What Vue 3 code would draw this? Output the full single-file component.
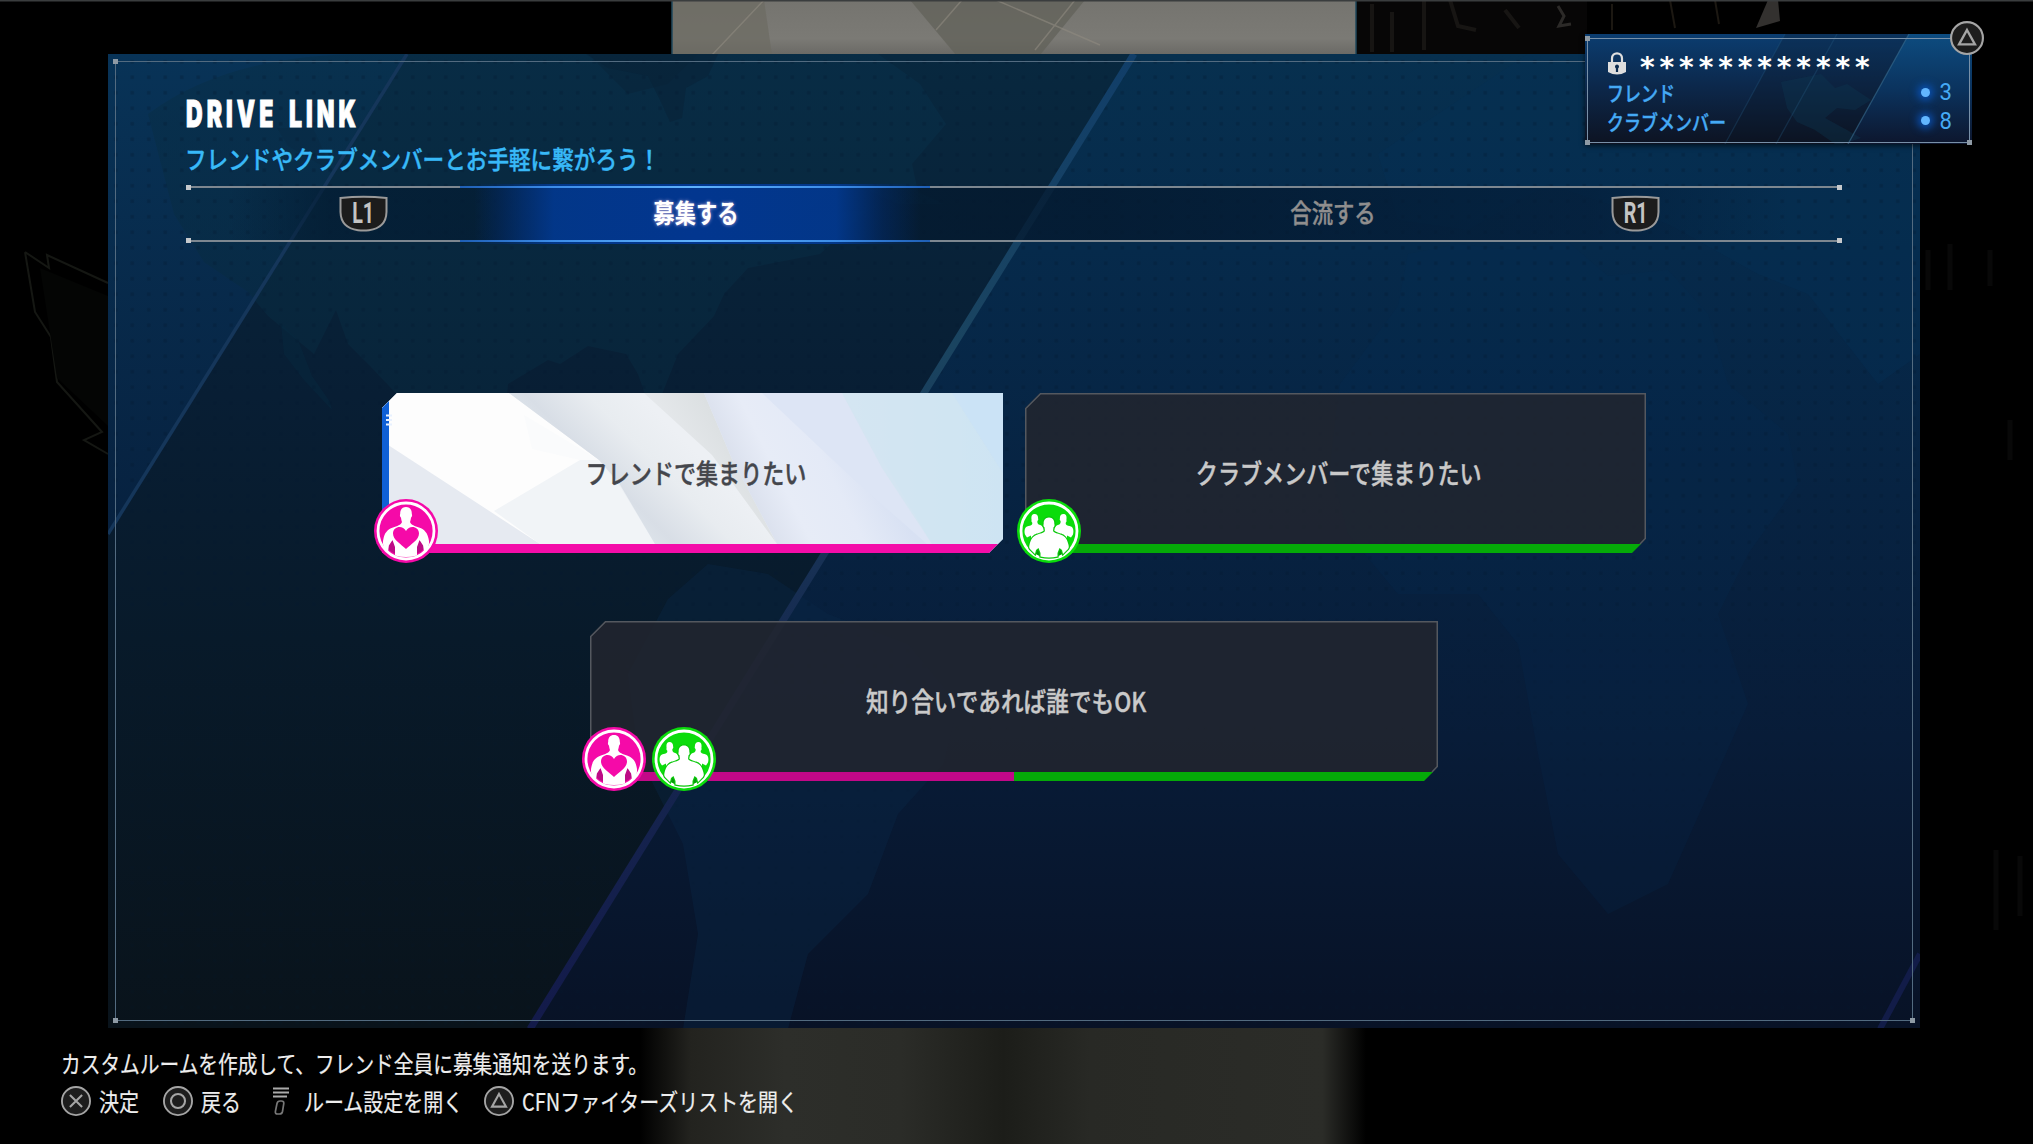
<template>
    <div class="screen">
        <!-- dimmed stage behind the window -->
        <svg class="backdrop" viewBox="0 0 2033 1144" aria-hidden="true">
            <defs>
                <linearGradient id="stoneTop" x1="0" y1="0" x2="0" y2="1">
                    <stop offset="0" stop-color="#75746f" />
                    <stop offset="0.7" stop-color="#7b7a75" />
                    <stop offset="1" stop-color="#6a6965" />
                </linearGradient>
                <linearGradient id="stoneFloor" x1="0" y1="0" x2="1" y2="0">
                    <stop offset="0" stop-color="#000" />
                    <stop offset="0.07" stop-color="#23231f" />
                    <stop offset="0.2" stop-color="#2d2e2a" />
                    <stop offset="0.36" stop-color="#2b2c28" />
                    <stop offset="0.5" stop-color="#1c1d19" />
                    <stop offset="0.62" stop-color="#282925" />
                    <stop offset="0.94" stop-color="#2b2c28" />
                    <stop offset="1" stop-color="#000" />
                </linearGradient>
            </defs>
            <rect width="2033" height="1144" fill="#000" />
            <rect x="672" y="0" width="684" height="55" fill="url(#stoneTop)" />
            <path d="M672 0H764L772 55H672Z" fill="#6c6b62" opacity="0.7" />
            <path d="M910 0H1085L1040 55H956Z" fill="#62615a" opacity="0.75" />
            <path d="M764 0L712 55M962 0L936 30M996 0L1100 45M1075 0L1035 50" stroke="#8f8b80" stroke-width="1.5" fill="none" opacity="0.6" />
            <path d="M672 0V54M1356 0V54" stroke="#20485c" stroke-width="1.5" />
            <rect x="1357" y="0" width="230" height="54" fill="#070606" />
            <path d="M1372 4v48M1392 12v40M1424 0v50M1450 0l8 26 18 4M1505 10l14 18" stroke="#171513" stroke-width="4" fill="none" />
            <path d="M1558 6l6 10-5 10 12 -2" stroke="#2c2a28" stroke-width="3" fill="none" />
            <path d="M1612 4v26M1670 0l5 28M1715 0l4 24" stroke="#1c1812" stroke-width="2" fill="none" />
            <path d="M1768 0h10l2 21-24 7z" fill="#33312f" />
            <path d="M25 252l24 16-2-13 61 28M25 252l10 60 16 25 6 45 45 50-18 8 24 14" stroke="#151713" stroke-width="2" fill="none" />
            <path d="M40 268l68 28v130L57 378z" fill="#040504" />
            <rect x="640" y="1028" width="726" height="116" fill="url(#stoneFloor)" />
            <path d="M1928 250v40M1950 244v46M1990 250v36M2010 420v40M1996 850v80M2020 856v60" stroke="#080808" stroke-width="5" />
            <rect width="2033" height="1.5" fill="#3a3d3e" />
        </svg>

        <main class="window">
            <svg class="window-art" viewBox="0 0 1812 974" aria-hidden="true">
                <defs>
                    <linearGradient id="winBase" x1="0" y1="0" x2="0" y2="1">
                        <stop offset="0" stop-color="#07304f" />
                        <stop offset="0.2" stop-color="#062a4b" />
                        <stop offset="0.45" stop-color="#072342" />
                        <stop offset="0.7" stop-color="#081c38" />
                        <stop offset="1" stop-color="#081226" />
                    </linearGradient>
                    <linearGradient id="winShade" x1="0" y1="0" x2="0" y2="1">
                        <stop offset="0" stop-color="#08283f" />
                        <stop offset="0.35" stop-color="#081e34" />
                        <stop offset="0.6" stop-color="#081a2a" />
                        <stop offset="1" stop-color="#09131b" />
                    </linearGradient>
                    <linearGradient id="winCorner" x1="0" y1="0" x2="0" y2="1">
                        <stop offset="0" stop-color="#083357" />
                        <stop offset="1" stop-color="#07213f" />
                    </linearGradient>
                    <linearGradient id="landLeft" x1="0" y1="0" x2="0" y2="1">
                        <stop offset="0" stop-color="#082f49" />
                        <stop offset="1" stop-color="#08263a" />
                    </linearGradient>
                    <linearGradient id="slashLine" x1="0" y1="0" x2="0" y2="1">
                        <stop offset="0" stop-color="#113e69" />
                        <stop offset="0.3" stop-color="#1a4460" />
                        <stop offset="0.6" stop-color="#162a50" />
                        <stop offset="1" stop-color="#131a4a" />
                    </linearGradient>
                    <pattern id="dots" width="16.5" height="15.5" patternUnits="userSpaceOnUse">
                        <rect x="6" y="6" width="3.5" height="3.5" fill="#03182f" />
                    </pattern>
                </defs>
                <rect width="1812" height="975" fill="url(#winBase)" />
                <path d="M0 0H1026L420 975H0Z" fill="url(#winShade)" />
                <path d="M0 0H298L0 480Z" fill="url(#winCorner)" />
                <!-- north america -->
                <path d="M40 60Q120 0 260 0H480L520 40 560 30 590 0H770L812 30 826 52 838 70 804 110 810 138 836 150 790 150 760 136 722 134 688 168 716 160 760 156 712 200 640 214 616 240 606 262 570 300 554 340 564 390 548 372 530 320 518 300 480 292 452 310 440 306 400 330 396 372 404 420 440 440 452 470 400 450 376 410 340 380 300 352 262 312 240 290 228 256 206 300 160 262 140 238 96 208 66 160Z" fill="url(#landLeft)" opacity="0.6" />
                <path d="M478 0H610L600 22 578 34 574 64 562 68 552 46 540 22 500 14Z" fill="#082339" opacity="0.6" />
                <path d="M169 74L205 74 225 118 180 92Z" fill="#082339" opacity="0.2" />
                <path d="M173 270L190 286 204 322 222 348 224 356 196 326 176 300Z" fill="#082a42" opacity="0.4" />
                <!-- south america -->
                <path d="M560 545L600 510 660 520 720 560 800 590 850 650 835 710 790 760 760 840 700 900 680 975H575L590 880 575 790 530 700 520 620Z" fill="#0a2748" opacity="0.38" />
                <!-- africa and europe -->
                <path d="M1232 330L1290 252 1300 200 1350 190 1400 196 1460 188 1500 222 1560 216 1600 260 1620 330 1680 380 1690 430 1640 500 1610 560 1640 650 1600 740 1560 830 1500 860 1450 800 1430 700 1410 590 1370 540 1290 540 1240 480 1222 410Z" fill="#07305a" opacity="0.17" />
                <path d="M1270 100L1330 60 1420 0H1812V300L1770 330 1700 240 1650 220 1560 170 1440 130 1360 176 1290 166Z" fill="#073056" opacity="0.35" />
                <rect width="1812" height="560" fill="url(#dots)" opacity="0.3" />
                <rect y="560" width="1812" height="415" fill="url(#dots)" opacity="0.13" />
                <path d="M299 0L0 480" stroke="#15365a" stroke-width="3.5" />
                <path d="M1026 0L422 975" stroke="url(#slashLine)" stroke-width="7" />
                <path d="M1812 900L1772 975" stroke="#121c48" stroke-width="6" />
            </svg>
            <div class="frame">
                <i class="pin tl"></i><i class="pin bl"></i><i class="pin br"></i>
            </div>

            <header class="head">
                <h1><span class="fit fit-title">DRIVE LINK</span></h1>
                <p><span class="fit fit-sub">フレンドやクラブメンバーとお手軽に繋がろう！</span></p>
            </header>

            <nav class="tabs">
                <i class="pin tl"></i><i class="pin tr"></i><i class="pin bl"></i><i class="pin br"></i>
                <span class="shoulder">
                    <svg viewBox="0 0 49 37"><path :d="shoulderPath" /></svg>
                    <b>L1</b>
                </span>
                <a class="tab active"><span class="fit">募集する</span></a>
                <a class="tab"><span class="fit">合流する</span></a>
                <span class="shoulder">
                    <svg viewBox="0 0 49 37"><path :d="shoulderPath" /></svg>
                    <b>R1</b>
                </span>
            </nav>

            <section class="cards">
                <div v-for="(row, r) in rows" :key="r" class="card-row">
                    <button v-for="card in row" :key="card.label" class="card" :class="{ selected: card.selected, wide: card.w > 700 }" :style="{ width: card.w + 'px' }">
                        <svg class="card-bg" :viewBox="`0 0 ${card.w} 160`" aria-hidden="true">
                            <defs>
                                <clipPath :id="'cut' + card.w + r + card.label.length">
                                    <path :d="outline(card.w)" />
                                </clipPath>
                            </defs>
                            <g :clip-path="`url(#cut${card.w}${r}${card.label.length})`">
                                <g v-if="card.selected">
                                    <defs>
                                        <linearGradient id="paper" x1="0" y1="0" x2="1" y2="0">
                                            <stop offset="0" stop-color="#f5f6f8" />
                                            <stop offset="0.45" stop-color="#eaeef3" />
                                            <stop offset="0.75" stop-color="#dde7f5" />
                                            <stop offset="1" stop-color="#cbe3f8" />
                                        </linearGradient>
                                        <linearGradient id="foldA" gradientUnits="userSpaceOnUse" x1="190" y1="85" x2="265" y2="10">
                                            <stop offset="0" stop-color="#dfe6ec" />
                                            <stop offset="0.25" stop-color="#d8dee6" />
                                            <stop offset="0.65" stop-color="#e8ecf0" />
                                            <stop offset="1" stop-color="#edf0f4" />
                                        </linearGradient>
                                        <linearGradient id="foldB" gradientUnits="userSpaceOnUse" x1="300" y1="70" x2="345" y2="42">
                                            <stop offset="0" stop-color="#e6e9ec" />
                                            <stop offset="1" stop-color="#dce0e2" />
                                        </linearGradient>
                                        <linearGradient id="foldC" gradientUnits="userSpaceOnUse" x1="350" y1="80" x2="470" y2="20">
                                            <stop offset="0" stop-color="#d9dfec" />
                                            <stop offset="0.3" stop-color="#e7ecf7" />
                                            <stop offset="0.65" stop-color="#e4eaf7" />
                                            <stop offset="1" stop-color="#d8e1f3" />
                                        </linearGradient>
                                    </defs>
                                    <rect width="621" height="160" fill="url(#paper)" />
                                    <path d="M0 0H127L217 67 137 115 158 151 0 60Z" fill="#fdfdfd" />
                                    <path d="M0 48L158 151H0Z" fill="#e6eaf1" />
                                    <path d="M198 67L217 67 239 95 273 151H158L112 118Z" fill="#f1f4f7" />
                                    <path d="M142 22L217 67H198L150 56Z" fill="#fafbfc" />
                                    <path d="M127 0H262L345 70 398 151H273L237 90 217 67Z" fill="url(#foldA)" />
                                    <path d="M262 0H322L350 66 395 151 330 62Z" fill="url(#foldB)" />
                                    <path d="M322 0H380L545 151H395L350 66Z" fill="url(#foldC)" />
                                    <path d="M380 0H460L490 50 550 151H545L470 85Z" fill="#dde5f5" />
                                    <path d="M460 0H621V151H550L500 75Z" fill="#d0e5f0" opacity="0.65" />
                                    <path d="M570 0H621V80Z" fill="#c8e2fa" opacity="0.5" />
                                    <path d="M0 0H7V160H0Z" fill="#0f60d6" />
                                    <path d="M4 22.500h6M4 27h6M4 31.500h6" stroke="#e8f1ff" stroke-width="1.8" />
                                </g>
                                <rect v-else :width="card.w" height="160" fill="#22252f" opacity="0.86" />
                                <rect v-for="(c, i) in card.bars" :key="c" :x="(card.w / card.bars.length) * i" y="151" :width="card.w / card.bars.length" height="9" :fill="c" />
                            </g>
                            <path v-if="!card.selected" :d="edge(card.w)" fill="none" stroke="#54585f" stroke-width="1.5" />
                        </svg>
                        <span class="badges">
                            <svg v-for="kind in card.badges" :key="kind" class="badge" viewBox="0 0 64 64">
                                <template v-if="kind === 'friend'">
                                    <circle cx="32" cy="32" r="32" fill="#f50aa8" />
                                    <circle cx="32" cy="32" r="28" fill="#f50aa8" stroke="#fff" stroke-width="2.8" />
                                    <path d="M14 42H50V50A26 26 0 0 1 14 50Z" fill="#bd0b86" />
                                    <path d="M32 8c4 0 6 3 5.800 7 .6 1 .2 3-.8 3.400-.2 2-.6 3.400-1 4.600 1 3 5 4 9 5.500 6 2 8.500 6 9.500 11 .8 3 .8 6-.4 8.500l-4 5.500-1-7-3.600-5.500-2.500 7v8.500q-11 3-22 0V48l-2.500-7-3.600 5.500-1 7-4-5.500c-1.200-2.500-1.200-5.500-.4-8.500 1-5 3.500-9 9.500-11 4-1.500 8-2.500 9-5.500-.4-1.200-.8-2.600-1-4.600-1-.4-1.400-2.400-.8-3.400C26 11 28 8 32 8z" fill="#fff" />
                                    <path d="M32 50C27 45 19 41 19 34.500c0-7 9.500-9 13-2.500 3.500-6.500 13-4.500 13 2.500C45 41 37 45 32 50z" fill="#f50aa8" />
                                </template>
                                <template v-else>
                                    <circle cx="32" cy="32" r="32" fill="#0bdc0b" />
                                    <circle cx="32" cy="32" r="28" fill="#0bdc0b" stroke="#fff" stroke-width="2.800" />
                                    <path :d="matePath" fill="#fff" />
                                    <path :d="matePath" fill="#fff" transform="matrix(-1 0 0 1 64 0)" />
                                    <path d="M16 46H48V53A26 26 0 0 1 16 53Z" fill="#079a0c" />
                                    <path d="M32 18.500c4 0 5.600 3 5.300 6.600.6 1 .2 2.800-.8 3.200-.2 2-.4 3-.4 3.800 1 2 4.500 2.500 7.900 3.600 5 1.600 6.500 6 7.500 10 .4 2 .5 3-.5 4.300L46 55l-1-4-2.500-2-2 5v3.500q-8.500 2-17 0V54l-2-5-2.500 2-1 4-5-5c-1-1.300-.9-2.300-.5-4.300 1-4 2.500-8.400 7.500-10 3.400-1.100 6.900-1.600 7.900-3.600 0-.8-.2-1.800-.4-3.800-1-.4-1.400-2.200-.8-3.200-.3-3.600 1.300-6.600 5.300-6.600z" fill="#fff" stroke="#0bc80b" stroke-width="2.400" paint-order="stroke" />
                                </template>
                            </svg>
                        </span>
                        <span class="fit card-label">{{ card.label }}</span>
                    </button>
                </div>
            </section>
        </main>

        <aside class="online">
            <svg class="online-art" viewBox="0 0 387 110" preserveAspectRatio="none" aria-hidden="true">
                <defs>
                    <linearGradient id="onBase" x1="0" y1="0" x2="0" y2="1">
                        <stop offset="0" stop-color="#0b3d70" />
                        <stop offset="0.45" stop-color="#0c294d" />
                        <stop offset="1" stop-color="#0d1322" />
                    </linearGradient>
                    <linearGradient id="onRight" x1="0" y1="0" x2="0" y2="1">
                        <stop offset="0" stop-color="#0d4c80" />
                        <stop offset="0.5" stop-color="#0b335e" />
                        <stop offset="1" stop-color="#0d162d" />
                    </linearGradient>
                </defs>
                <rect width="387" height="110" fill="url(#onBase)" />
                <path d="M324 0H387V110H263Z" fill="url(#onRight)" />
                <path d="M200 0H324L263 110H140Z" fill="#0b1520" opacity="0.25" />
                <path d="M196 48L236 40 250 54 262 50 286 66 270 76 252 74 240 84 262 96 276 104 258 110H250L230 96 212 88 202 74Z" fill="#0d3a52" opacity="0.35" />
                <path d="M252 0L191 110M200 0L140 110" stroke="#275d85" stroke-width="1.300" opacity="0.3" />
                <path d="M324 0L263 110" stroke="#3a6f92" stroke-width="1.300" opacity="0.6" />
            </svg>
            <div class="frame"><i class="pin tl"></i><i class="pin bl"></i><i class="pin br"></i></div>
            <div class="secret">
                <svg class="lock" viewBox="0 0 18 23">
                    <path d="M4 11V6.500C4 -.4 14 -.4 14 6.500V11" fill="none" stroke="#dedede" stroke-width="2.200" />
                    <path d="M0 10H18V20Q9 25 0 20Z" fill="#dedede" />
                    <path d="M9 12.500a2.200 2.200 0 0 1 1.100 4V20H7.900v-3.500a2.200 2.200 0 0 1 1.100-4z" fill="#0c2c50" />
                </svg>
                <span class="stars">************</span>
            </div>
            <div v-for="item in online" :key="item.label" class="count">
                <span class="fit">{{ item.label }}</span>
                <i></i>
                <b>{{ item.value }}</b>
            </div>
            <svg class="key corner-key" viewBox="0 0 32 32">
                <circle cx="16" cy="16" r="15" />
                <path d="M16 8.500L23.500 22H8.500Z" />
            </svg>
        </aside>

        <footer class="foot">
            <p><span class="fit">カスタムルームを作成して、フレンド全員に募集通知を送ります。</span></p>
            <ul>
                <li v-for="hint in hints" :key="hint.label" :style="{ width: hint.w + 'px' }">
                    <svg v-if="hint.icon !== 'options'" class="key" viewBox="0 0 32 32">
                        <circle cx="16" cy="16" r="15" />
                        <path v-if="hint.icon === 'cross'" d="M9.500 9.500L22.500 22.500M22.500 9.500L9.500 22.500" />
                        <path v-else-if="hint.icon === 'triangle'" d="M16 8.500L23.500 22H8.500Z" />
                        <path v-else d="M8.500 16a7.500 7.500 0 1 0 15 0a7.500 7.500 0 1 0 -15 0Z" />
                    </svg>
                    <svg v-else class="options" viewBox="0 0 28 30">
                        <path d="M6 2.500H22M6 6.500H22M6 10.500H20" stroke="#aaa" stroke-width="2" />
                        <path d="M10 17.500Q10.500 15 13 15H14.500Q17 15 16.800 17.500L15.500 25.500Q15 28 12.500 28H10.500Q8 28 8.400 25.500Z" fill="none" stroke="#777" stroke-width="1.700" />
                    </svg>
                    <span class="fit">{{ hint.label }}</span>
                </li>
            </ul>
        </footer>
    </div>
</template>

<script setup>
const shoulderPath = 'M1.500 3Q24.500 .5 47.500 3V17Q47 33 30 35.200Q24.500 36 19 35.200Q2 33 1.500 17Z';
const matePath = 'M17.500 15c2.600 0 3.800 2 3.600 4.500.5 1-.1 2.200-.7 2.500-.2 2 .2 3 2 3.800 2.500.8 4.600 2.200 4.600 6.200l-2 4-5 1-2.500-1.500v3l-1 2.500-2.500-2v-2.500l-4 2-2-3c-.8-3-.6-7 2-8 2-.6 4-1 5-2 .4-.6.400-1.200.2-2-.8-.4-1-1.600-.6-2.400C14 17 15 15 17.500 15z';

const rows = [
    [
        { label: 'フレンドで集まりたい', w: 621, badges: ['friend'], bars: ['#f40da9'], selected: true },
        { label: 'クラブメンバーで集まりたい', w: 621, badges: ['club'], bars: ['#05aa08'] }
    ],
    [{ label: '知り合いであれば誰でもOK', w: 848, badges: ['friend', 'club'], bars: ['#c20888', '#05aa08'] }]
];

const online = [
    { label: 'フレンド', value: 3 },
    { label: 'クラブメンバー', value: 8 }
];

const hints = [
    { icon: 'cross', label: '決定', w: 102 },
    { icon: 'circle', label: '戻る', w: 103 },
    { icon: 'options', label: 'ルーム設定を開く', w: 218 },
    { icon: 'triangle', label: 'CFNファイターズリストを開く', w: 330 }
];

// cut corners: top left and bottom right
const outline = w => `M15 0H${w}V146L${w - 14} 160H0V15Z`;
const edge = w => `M.75 151V15.500L15.500 .75H${w - 0.75}V145.500L${w - 6} 151`;
</script>

<style>
body {
    margin: 0;
    background: #000;
}
</style>

<style scoped>
.screen {
    position: relative;
    width: 2033px;
    height: 1144px;
    overflow: hidden;
    display: flex;
    flex-direction: column;
    font-family: "Noto Sans CJK JP", "Noto Sans", sans-serif;
    color: #fff;
}

.backdrop,
.window-art,
.online-art {
    position: absolute;
    inset: 0;
    width: 100%;
    height: 100%;
}

/* the game face is narrower and a bit heavier than the system one */
.fit {
    display: inline-block;
    white-space: nowrap;
    transform-origin: 0 50%;
    -webkit-text-stroke: 0.4px currentColor;
}

.window {
    position: relative;
    flex: none;
    width: 1812px;
    height: 974px;
    margin: 54px 0 0 108px;
}

.frame {
    position: absolute;
    inset: 7px;
    border: 1.5px solid #536b80;
}

.pin {
    position: absolute;
    width: 5px;
    height: 5px;
    background: #8e9aa5;
    z-index: 1;
}

.tl { left: -3px; top: -3px; }
.tr { right: -3px; top: -3px; }
.bl { left: -3px; bottom: -3px; }
.br { right: -3px; bottom: -3px; }

.head {
    position: relative;
    padding: 41px 0 0 78px;
}

h1,
p {
    margin: 0;
}

h1 {
    height: 38px;
    font: 900 37px/38px Inter, sans-serif;
    letter-spacing: 6.5px;
    word-spacing: 5px;
}

.fit-title {
    transform: scaleX(0.622);
    -webkit-text-stroke: 1px currentColor;
}

.head p {
    margin-top: 10px;
    height: 30px;
    font-size: 25px;
    font-weight: 500;
    line-height: 30px;
    color: #38b9f8;
}

.fit-sub {
    margin-left: -1px;
    transform: scaleX(0.864);
}

.tabs {
    position: relative;
    display: grid;
    grid-template-columns: 49px 615px 608px 49px;
    align-items: center;
    width: 1500px;
    height: 52px;
    margin: 13px 0 0 81px;
    padding-left: 150px;
    border: solid #7d8790;
    border-width: 2px 0;
    background: linear-gradient(90deg, transparent 40px, #031c33b0 140px, #04182dc0 55%, #041c37a0 1400px, transparent 1600px);
}

.tabs .pin {
    background: #c6c9cc;
}

.tab {
    position: relative;
    height: 52px;
    display: flex;
    align-items: center;
    justify-content: center;
    font-size: 26px;
    font-weight: 500;
    color: #8f8e8e;
}

.tab .fit {
    position: relative;
    top: -3px;
    left: 1px;
    transform: scaleX(0.82);
    transform-origin: 50% 50%;
}

.tab + .tab {
    padding-left: 50px;
}

.tab.active {
    color: #fff;
    font-weight: 700;
    text-shadow: 0 0 4px #b7a7d8;
}

.tab.active .fit {
    -webkit-text-stroke: 0;
}

.tab.active::before {
    content: "";
    position: absolute;
    width: 470px;
    top: -4px;
    bottom: -4px;
    left: 72px;
    background: linear-gradient(90deg, transparent 3%, #022c6e80 9%, #023a94e0 20%, #02368f 50%, #023a94e0 80%, #022c6e80 90%, transparent 98%);
}

.tab.active::after {
    content: "";
    position: absolute;
    width: 470px;
    top: -2px;
    bottom: -2px;
    left: 72px;
    border: solid;
    border-width: 2px 0;
    border-image: linear-gradient(90deg, #1f5fb5, #3c8de8 20%, #5fb2fb 50%, #3c8de8 80%, #1f5fb5) 2 0;
}

.shoulder {
    position: relative;
    top: -1px;
    height: 37px;
    display: flex;
    align-items: center;
    justify-content: center;
}

.shoulder svg {
    position: absolute;
    inset: 0;
    fill: #1c1c1c;
    stroke: #9a9a9a;
    stroke-width: 2;
}

.shoulder b {
    position: relative;
    font: 700 29px/34px Roboto, sans-serif;
    color: #c4c4c4;
    transform: scaleX(0.68);
}

.cards {
    position: relative;
    display: flex;
    flex-direction: column;
    align-items: center;
    gap: 68px;
    margin-top: 150.500px;
}

.card-row {
    display: flex;
    gap: 22px;
}

.card {
    position: relative;
    height: 160px;
    padding: 0;
    border: 0;
    background: none;
    font: 500 27px/40px "Noto Sans CJK JP", sans-serif;
    color: #c9c9c9;
}

.card.selected {
    color: #44464c;
}

.card-bg {
    position: absolute;
    inset: 0;
}

.card-label {
    position: relative;
    margin-left: 7px;
    transform: scaleX(0.818);
    transform-origin: 50% 50%;
}

.card.wide .card-label {
    margin-left: -15px;
    transform: scaleX(0.839);
}

/* badges hang over the lower left edge */
.badges {
    position: absolute;
    left: -8px;
    bottom: -10px;
    display: flex;
    gap: 6px;
}

.badge {
    width: 64px;
    height: 64px;
}

.online {
    position: absolute;
    left: 1585px;
    top: 34px;
    width: 387px;
    height: 110px;
    box-sizing: border-box;
    padding: 14px 20px 0 23px;
    box-shadow: 0 2px 5px #0009;
}

.online .frame {
    inset: 4px 2px 1px 2px;
    border-color: #7890a8;
}

.secret {
    position: relative;
    display: flex;
    align-items: center;
    gap: 14px;
    height: 30px;
}

.lock {
    width: 18px;
    height: 23px;
}

.stars {
    position: relative;
    top: 5px;
    font: 700 28px/28px "DejaVu Sans", sans-serif;
    letter-spacing: 4.9px;
}

.count {
    position: relative;
    display: grid;
    grid-template-columns: 313px 10px 1fr;
    align-items: center;
    height: 28.5px;
    font-size: 21px;
    font-weight: 500;
    line-height: 28px;
    color: #45aaf5;
}

.count .fit {
    width: 150px;
    margin-left: -1px;
    transform: scaleX(0.81);
}

.count i {
    width: 9px;
    height: 9px;
    border-radius: 50%;
    background: #62b6ff;
    box-shadow: 0 0 8px 3px #0a56c0;
}

.count b {
    justify-self: end;
    font: 400 24px/28px Roboto, sans-serif;
    transform: scaleX(0.92);
}

.key {
    fill: #1d1d1d;
    stroke: #a5a5a5;
    stroke-width: 2;
}

.key path {
    fill: none;
    stroke-width: 2.2;
}

.corner-key {
    position: absolute;
    right: -12px;
    top: -13px;
    width: 34px;
    height: 34px;
}

.foot {
    position: relative;
    padding: 17px 0 0 61px;
    font-size: 24px;
    line-height: 36px;
    color: #eee;
}

.foot .fit {
    transform: scaleX(0.821);
    -webkit-text-stroke: 0.2px currentColor;
}

.foot ul {
    display: flex;
    margin: 1px 0 0;
    padding: 0;
    list-style: none;
}

.foot li {
    display: flex;
    align-items: center;
    gap: 8px;
    height: 38px;
}

.foot li .fit {
    transform: scaleX(0.832);
}

.foot .key,
.foot .options {
    flex: none;
    width: 30px;
    height: 30px;
}
</style>
